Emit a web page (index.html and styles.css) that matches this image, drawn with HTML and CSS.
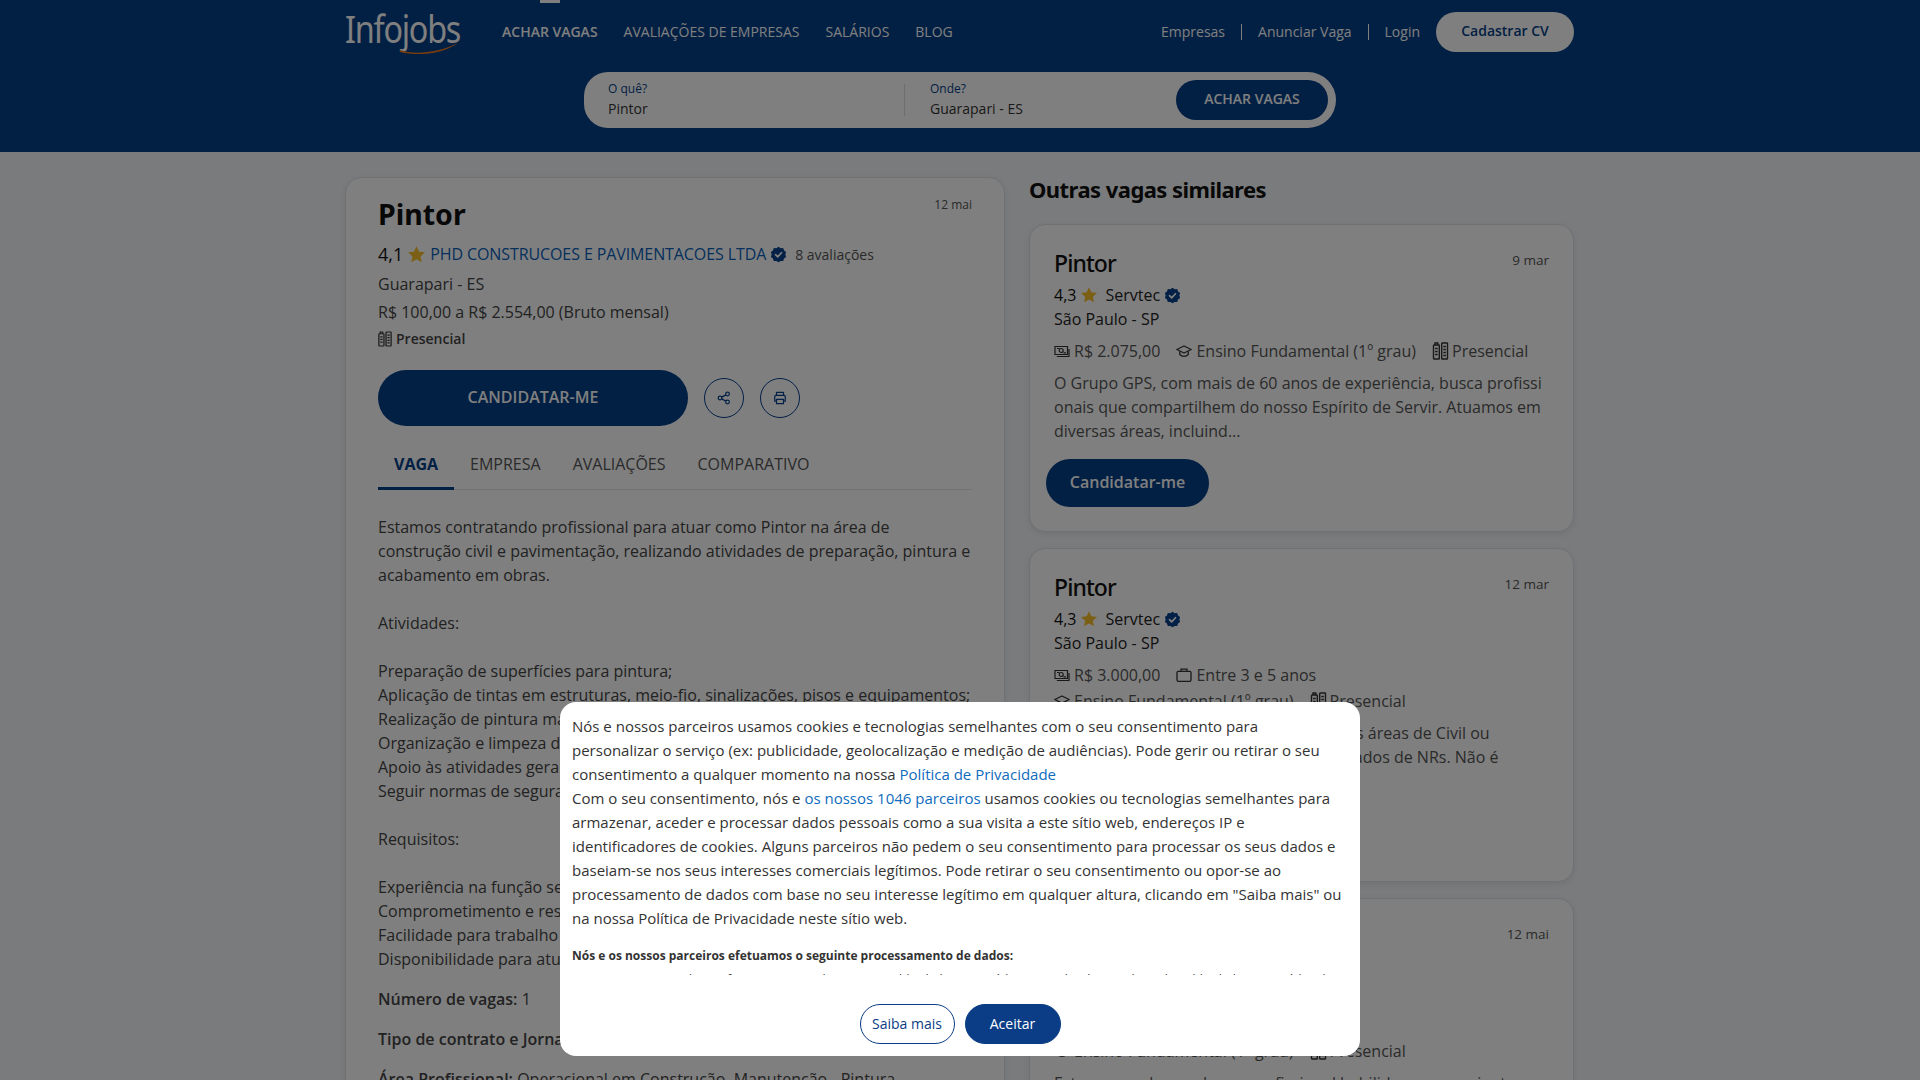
FILE: index.html
```html
<!DOCTYPE html>
<html lang="pt-BR">
<head>
<meta charset="utf-8">
<title>Pintor - Infojobs</title>
<link rel="stylesheet" href="styles.css">
</head>
<body>
<svg class="defs" width="0" height="0" aria-hidden="true">
  <symbol id="star" viewBox="0 0 24 24"><path fill="#f5bf2a" d="M12 1.5l3.2 6.9 7.5.9-5.6 5.1 1.5 7.4L12 18.100l-6.600 3.700 1.500-7.400L1.300 9.300l7.500-.9z"/></symbol>
  <symbol id="badge" viewBox="0 0 24 24"><path fill="#06408c" d="M12 1l3 2 3.600-.2 1.200 3.400 2.900 2.200-1 3.600 1 3.600-2.900 2.200-1.200 3.400-3.600-.2-3 2-3-2-3.600.2-1.200-3.400L1.300 15.600l1-3.600-1-3.600 2.900-2.200 1.200-3.400L9 3z"/><path fill="none" stroke="#fff" stroke-width="2.400" stroke-linecap="round" stroke-linejoin="round" d="M7.800 12.300l3 3 5.400-5.800"/></symbol>
  <symbol id="office" viewBox="0 0 16 18"><g fill="none" stroke="#333" stroke-width="1.400"><rect x="1" y="3" width="5.800" height="14" rx=".6"/><rect x="9.200" y="1" width="5.800" height="16" rx=".6"/><path d="M2.500 3V1h2.800v2M2.600 6.500h2.600M2.600 9.500h2.600M2.600 12.500h2.600M10.800 4.500h2.600M10.800 7.500h2.600M10.800 10.500h2.600M10.800 13.500h2.600"/></g></symbol>
  <symbol id="money" viewBox="0 0 16 16"><g fill="none" stroke="#333" stroke-width="1.200"><path d="M1 3.500h12.500v8H1z"/><path d="M2.800 13.500H15V6"/><circle cx="7.200" cy="7.500" r="2"/><path d="M3 5.500l2.500 0M9.500 9.800h2.500"/></g></symbol>
  <symbol id="cap" viewBox="0 0 16 16"><g fill="none" stroke="#333" stroke-width="1.300" stroke-linejoin="round"><path d="M.8 6.500L8 3l7.200 3.500L8 10z"/><path d="M3.800 8.300v3.200c1 1.200 2.600 1.800 4.200 1.800s3.200-.6 4.200-1.800V8.300"/></g></symbol>
  <symbol id="case" viewBox="0 0 16 16"><g fill="none" stroke="#333" stroke-width="1.300"><rect x="1" y="4.300" width="14" height="10" rx="1.200"/><path d="M5 4.300V2.200h6v2.100"/></g></symbol>
  <symbol id="share" viewBox="0 0 16 16"><g fill="none" stroke="#06408c" stroke-width="1.400"><circle cx="3.500" cy="8" r="2.100"/><circle cx="12" cy="3.400" r="2.100"/><circle cx="12" cy="12.600" r="2.100"/><path d="M5.400 7l4.800-2.600M5.400 9l4.800 2.600"/></g></symbol>
  <symbol id="print" viewBox="0 0 16 16"><g fill="none" stroke="#06408c" stroke-width="1.400" stroke-linejoin="round"><path d="M4 5V1.500h8V5"/><path d="M4 11.500H2V6.300C2 5.600 2.500 5 3.300 5h9.400c.8 0 1.300.6 1.300 1.300v5.200h-2"/><path d="M4 9.500h8v5H4z"/></g></symbol>
</svg>

<header class="topbar">
  <span class="topbar-sliver"></span>
  <div class="topbar-row">
    <a class="logo"><span class="logo-word">Infojobs</span>
      <svg class="logo-swoosh" viewBox="0 0 60 12" width="60" height="12"><path fill="#f07a1a" d="M0 7c14 5 38 3 58-7C42 12 16 13 0 9z"/></svg>
    </a>
    <nav class="mainnav">
      <a class="mainnav-item is-active">ACHAR VAGAS</a>
      <a class="mainnav-item">AVALIAÇÕES DE EMPRESAS</a>
      <a class="mainnav-item">SALÁRIOS</a>
      <a class="mainnav-item">BLOG</a>
    </nav>
    <nav class="usernav">
      <a class="usernav-item">Empresas</a>
      <a class="usernav-item">Anunciar Vaga</a>
      <a class="usernav-item">Login</a>
      <a class="btn-cv">Cadastrar CV</a>
    </nav>
  </div>
  <form class="search">
    <div class="search-field">
      <span class="search-label">O quê?</span>
      <span class="search-value">Pintor</span>
    </div>
    <div class="search-field search-field-where">
      <span class="search-label">Onde?</span>
      <span class="search-value">Guarapari - ES</span>
    </div>
    <a class="search-btn">ACHAR VAGAS</a>
  </form>
</header>

<main class="layout">
  <article class="job">
    <div class="job-head">
      <h1 class="job-title">Pintor</h1>
      <span class="job-date">12 mai</span>
    </div>
    <div class="job-rating">
      <span class="score">4,1</span>
      <svg class="ico-star"><use href="#star"/></svg>
      <a class="company-link">PHD CONSTRUCOES E PAVIMENTACOES LTDA</a>
      <svg class="ico-badge"><use href="#badge"/></svg>
      <span class="reviews">8 avaliações</span>
    </div>
    <p class="job-line job-city">Guarapari - ES</p>
    <p class="job-line job-salary">R$ 100,00 a R$ 2.554,00 (Bruto mensal)</p>
    <p class="job-mode"><svg class="ico-mode"><use href="#office"/></svg>Presencial</p>
    <div class="job-actions">
      <a class="btn-apply">CANDIDATAR-ME</a>
      <a class="btn-round"><svg class="ico-round"><use href="#share"/></svg></a>
      <a class="btn-round"><svg class="ico-round"><use href="#print"/></svg></a>
    </div>
    <div class="tabs">
      <a class="tab is-active">VAGA</a>
      <a class="tab">EMPRESA</a>
      <a class="tab">AVALIAÇÕES</a>
      <a class="tab">COMPARATIVO</a>
    </div>
    <div class="job-body">
      <p class="para">Estamos contratando profissional para atuar como Pintor na área de construção civil e pavimentação, realizando atividades de preparação, pintura e acabamento em obras.<br><br>Atividades:<br><br>Preparação de superfícies para pintura;<br>Aplicação de tintas em estruturas, meio-fio, sinalizações, pisos e equipamentos;<br>Realização de pintura manual e com equipamentos;<br>Organização e limpeza do local de trabalho;<br>Apoio às atividades gerais da obra;<br>Seguir normas de segurança do trabalho.<br><br>Requisitos:<br><br>Experiência na função será um diferencial;<br>Comprometimento e responsabilidade;<br>Facilidade para trabalho em equipe;<br>Disponibilidade para atuar em obras.</p>
      <p class="para"><b>Número de vagas:</b> 1</p>
      <p class="para"><b>Tipo de contrato e Jornada:</b> Efetivo – CLT - Período Integral</p>
      <p class="para"><b>Área Profissional:</b> Operacional em Construção, Manutenção - Pintura</p>
    </div>
  </article>

  <aside class="similar">
    <h2 class="similar-title">Outras vagas similares</h2>

    <section class="card">
      <div class="card-head"><h3 class="card-title">Pintor</h3><span class="card-date">9 mar</span></div>
      <div class="card-rating"><span>4,3</span><svg class="ico-star"><use href="#star"/></svg><span class="card-company">Servtec</span><svg class="ico-badge"><use href="#badge"/></svg></div>
      <p class="card-city">São Paulo - SP</p>
      <div class="card-meta">
        <span class="meta"><svg class="ico-meta"><use href="#money"/></svg>R$ 2.075,00</span>
        <span class="meta"><svg class="ico-meta"><use href="#cap"/></svg>Ensino Fundamental (1º grau)</span>
        <span class="meta"><svg class="ico-meta ico-meta-office"><use href="#office"/></svg>Presencial</span>
      </div>
      <p class="card-desc">O Grupo GPS, com mais de 60 anos de experiência, busca profissi<br>onais que compartilhem do nosso Espírito de Servir. Atuamos em<br>diversas áreas, incluind...</p>
      <a class="btn-card">Candidatar-me</a>
    </section>

    <section class="card">
      <div class="card-head"><h3 class="card-title">Pintor</h3><span class="card-date">12 mar</span></div>
      <div class="card-rating"><span>4,3</span><svg class="ico-star"><use href="#star"/></svg><span class="card-company">Servtec</span><svg class="ico-badge"><use href="#badge"/></svg></div>
      <p class="card-city">São Paulo - SP</p>
      <div class="card-meta">
        <span class="meta"><svg class="ico-meta"><use href="#money"/></svg>R$ 3.000,00</span>
        <span class="meta"><svg class="ico-meta"><use href="#case"/></svg>Entre 3 e 5 anos</span>
        <span class="meta"><svg class="ico-meta"><use href="#cap"/></svg>Ensino Fundamental (1º grau)</span>
        <span class="meta"><svg class="ico-meta ico-meta-office"><use href="#office"/></svg>Presencial</span>
      </div>
      <p class="card-desc">Buscamos pintor, que atue em obras, nas áreas de Civil ou<br>manutenção, curso e certificados atualizados de NRs. Não é<br>necessário ter disponibilidade...</p>
      <a class="btn-card">Candidatar-me</a>
    </section>

    <section class="card">
      <div class="card-head"><h3 class="card-title">Pintor</h3><span class="card-date">12 mai</span></div>
      <div class="card-rating"><span>4,3</span><svg class="ico-star"><use href="#star"/></svg><span class="card-company">Servtec</span><svg class="ico-badge"><use href="#badge"/></svg></div>
      <p class="card-city">São Paulo - SP</p>
      <div class="card-meta">
        <span class="meta"><svg class="ico-meta"><use href="#money"/></svg>R$ 2.500,00</span>
        <span class="meta"><svg class="ico-meta"><use href="#case"/></svg>Entre 1 e 3 anos</span>
        <span class="meta"><svg class="ico-meta"><use href="#cap"/></svg>Ensino Fundamental (1º grau)</span>
        <span class="meta"><svg class="ico-meta ico-meta-office"><use href="#office"/></svg>Presencial</span>
      </div>
      <p class="card-desc">Estamos em busca de um profissional habilidoso e experiente</p>
    </section>
  </aside>
</main>

<div class="overlay">
  <div class="consent">
    <div class="consent-scroll">
      <p class="consent-text">Nós e nossos parceiros usamos cookies e tecnologias semelhantes com o seu consentimento para personalizar o serviço (ex: publicidade, geolocalização e medição de audiências). Pode gerir ou retirar o seu consentimento a qualquer momento na nossa <a class="consent-link">Política de Privacidade</a><br>Com o seu consentimento, nós e <a class="consent-link">os nossos 1046 parceiros</a> usamos cookies ou tecnologias semelhantes para armazenar, aceder e processar dados pessoais como a sua visita a este sítio web, endereços IP e identificadores de cookies. Alguns parceiros não pedem o seu consentimento para processar os seus dados e baseiam-se nos seus interesses comerciais legítimos. Pode retirar o seu consentimento ou opor-se ao processamento de dados com base no seu interesse legítimo em qualquer altura, clicando em "Saiba mais" ou na nossa Política de Privacidade neste sítio web.</p>
      <p class="consent-head">Nós e os nossos parceiros efetuamos o seguinte processamento de dados:</p>
      <p class="consent-small">Armazenar e/ou aceder a informações num dispositivo, Publicidade e conteúdo personalizados, medição de publicidade e conteúdo, identificadores</p>
    </div>
    <div class="consent-actions">
      <a class="consent-btn">Saiba mais</a>
      <a class="consent-btn is-primary">Aceitar</a>
    </div>
  </div>
</div>
</body>
</html>
```

FILE: styles.css
```css
* { box-sizing: border-box; }
html, body { margin: 0; height: 100%; overflow: hidden; }
body { background: #f4f6f9; color: #333; font: 16px/24px "Open Sans", "Noto Sans", sans-serif; }
p, h1, h2, h3 { margin: 0; }
a { color: inherit; text-decoration: none; }
.defs { position: absolute; }

.topbar { position: relative; height: 152px; background: #043e88; padding: 0 345px; }
.topbar-sliver { position: absolute; left: 540px; top: 0; width: 20px; height: 3px; background: #fff; }
.topbar-row { display: flex; align-items: center; height: 64px; }
.logo { display: block; position: relative; width: 157px; height: 64px; flex: none; }
.logo-word { display: block; margin-top: 3px; font: 400 39px/50px "Noto Sans", sans-serif; letter-spacing: -1.5px; color: #fff; transform: scaleX(.83); transform-origin: left center; }
.logo-swoosh { position: absolute; left: 55px; top: 43px; }
.mainnav { display: flex; gap: 26px; font-size: 14px; color: #fff; margin-top: -1px; }
.mainnav-item.is-active { font-weight: 600; }
.usernav { display: flex; align-items: center; margin-left: auto; margin-right: 1px; font-size: 14px; color: #fff; }
.usernav-item { line-height: 16px; padding: 0 16px; border-right: 1px solid #fff; }
.usernav-item:nth-child(3) { border-right: 0; }
.btn-cv { width: 138px; height: 40px; border-radius: 20px; background: #fff; color: #043e88; font-weight: 600; text-align: center; line-height: 38px; }

.search { display: flex; align-items: center; width: 752px; height: 56px; margin: 8px auto 0; background: #fff; border-radius: 24px 28px 28px 24px; padding: 0 8px 0 24px; }
.search-field { display: flex; flex-direction: column; width: 296px; height: 32px; justify-content: center; }
.search-field-where { width: 272px; padding-left: 25px; border-left: 1px solid #ddd; }
.search-label { font-size: 12px; line-height: 18px; font-weight: 500; color: #043e88; margin-top: -6px; }
.search-value { font-size: 14px; line-height: 20px; color: #333; margin-top: 1px; margin-bottom: -5px; }
.search-btn { width: 152px; height: 40px; margin-left: auto; border-radius: 20px; background: #043e88; color: #fff; font-size: 14px; font-weight: 600; text-align: center; line-height: 38px; }

.layout { display: grid; grid-template-columns: 660px 545px; gap: 24px; width: 1230px; margin: 25px auto 0; align-items: start; }

.job { background: #fff; border: 1px solid #dfe2e7; border-radius: 16px; padding: 16px 32px; box-shadow: 0 2px 6px rgba(0,0,0,.08); }
.job-head { display: flex; justify-content: space-between; align-items: flex-start; }
.job-title { font: 700 28.5px/40px "Noto Sans", sans-serif; color: #111; }
.job-date { font-size: 12px; line-height: 20px; color: #555; margin-top: 1px; }
.job-rating { display: flex; align-items: center; height: 24px; margin-top: 8px; color: #111; }
.score { font-size: 18px; }
.ico-star { width: 18px; height: 18px; margin: 0 4px; flex: none; }
.job-rating .ico-star { width: 19px; height: 19px; }
.company-link { color: #0a5fb8; letter-spacing: -.1px; }
.ico-badge { width: 17px; height: 17px; margin: 0 4px; flex: none; }
.reviews { font-size: 14px; color: #555; margin: 1px 0 0 4px; }
.job-line { color: #444; font-size: 16px; }
.job-city { margin-top: 6px; }
.job-salary { margin-top: 4px; }
.job-mode { display: flex; align-items: center; margin-top: 5px; font-size: 14px; line-height: 20px; font-weight: 600; color: #444; }
.ico-mode { width: 14px; height: 16px; margin-right: 4px; }
.job-actions { display: flex; align-items: center; gap: 16px; margin-top: 21px; }
.btn-apply { width: 310px; height: 56px; border-radius: 28px; background: #043e88; color: #fff; font-weight: 600; font-size: 16px; text-align: center; line-height: 54px; }
.btn-round { display: flex; align-items: center; justify-content: center; width: 40px; height: 40px; border: 1px solid #06408c; border-radius: 50%; background: #fff; }
.ico-round { width: 14px; height: 14px; }
.tabs { display: flex; height: 50px; margin-top: 14px; border-bottom: 1px solid #e3e5e8; }
.tab { padding: 0 16px; height: 50px; line-height: 48px; color: #555; border-bottom: 3px solid transparent; }
.tab.is-active { color: #043e88; font-weight: 700; border-bottom-color: #043e88; }
.job-body { margin-top: 25px; color: #444; }
.para { margin-bottom: 16px; }
.para b { font-weight: 600; }

.similar { margin-top: -1px; }
.similar-title { font: 700 22px/26px "Noto Sans", sans-serif; color: #111; margin-bottom: 22px; letter-spacing: -.55px; }
.card { background: #fff; border: 1px solid #dfe2e7; border-radius: 16px; padding: 22px 24px 24px; margin-bottom: 16px; box-shadow: 0 2px 6px rgba(0,0,0,.08); }
.card-head { display: flex; justify-content: space-between; align-items: flex-start; }
.card-title { font: 500 23px/32px "Noto Sans", sans-serif; color: #111; letter-spacing: -.9px; }
.card-date { font-size: 13.5px; line-height: 20px; color: #555; margin-top: 3px; }
.card-rating { display: flex; align-items: center; height: 24px; margin-top: 4px; color: #111; }
.card-company { margin-left: 3px; color: #222; }
.card-city { color: #222; line-height: 24px; }
.card-meta { display: flex; flex-wrap: wrap; column-gap: 16px; margin-top: 7px; color: #555; line-height: 26px; }
.meta { display: flex; align-items: center; }
.ico-meta { width: 16px; height: 16px; margin-right: 4px; flex: none; }
.ico-meta-office { width: 17px; height: 18px; margin-right: 3px; }
.card-desc { margin-top: 7px; color: #555; }
.btn-card { display: block; width: 163px; height: 48px; margin: 16px 0 0 -8px; border-radius: 24px; background: #043e88; color: #fff; font-weight: 600; text-align: center; line-height: 46px; }

.overlay { position: fixed; inset: 0; display: flex; flex-direction: column; justify-content: flex-end; align-items: center; padding-bottom: 24px; background: rgba(0,0,0,.5); }
.consent { width: 800px; height: 354px; padding: 9px 12px 12px; background: #fff; border-radius: 16px; }
.consent-scroll { height: 264px; overflow: hidden; padding-top: 3px; }
.consent-text { font-size: 15px; line-height: 24px; color: #333; }
.consent-link { color: #0f6cbd; }
.consent-head { margin-top: 18px; font-size: 12px; line-height: 16px; font-weight: 700; color: #333; }
.consent-small { margin-top: 8px; font-size: 12px; line-height: 16px; color: #333; white-space: nowrap; }
.consent-actions { display: flex; justify-content: center; gap: 10px; margin-top: 29px; }
.consent-btn { width: 95px; height: 40px; border: 1px solid #0a3d85; border-radius: 20px; color: #0a3d85; font-size: 14px; text-align: center; line-height: 38px; }
.consent-btn.is-primary { width: 96px; background: #0a3d85; color: #fff; }
```
